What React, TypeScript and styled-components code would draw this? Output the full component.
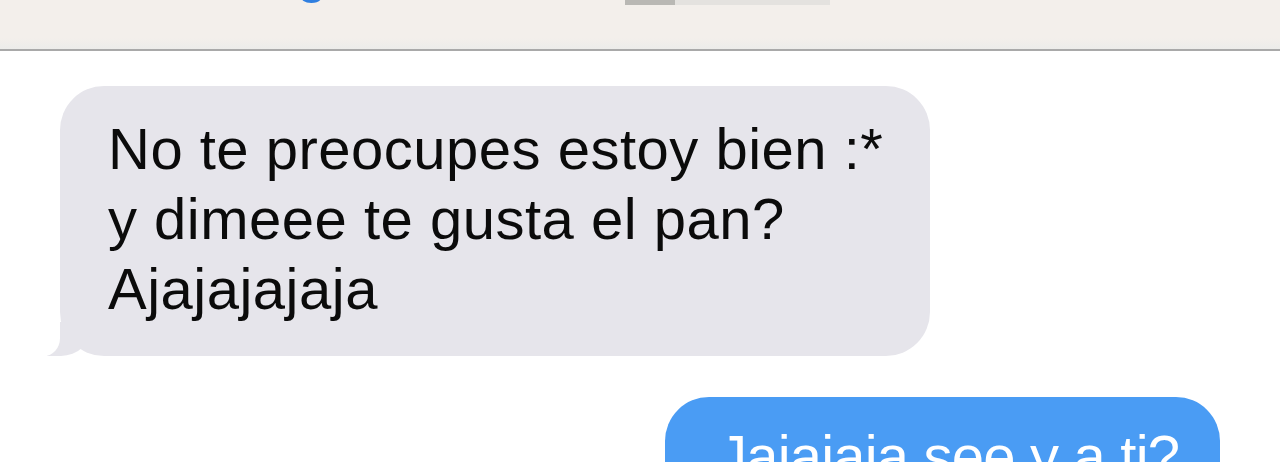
import styled, { createGlobalStyle } from 'styled-components';

const GlobalStyle = createGlobalStyle`
  html, body {
    margin: 0;
    padding: 0;
    background: #ffffff;
    overflow: hidden;
  }

  body {
    font-family: 'Liberation Sans', Arial, Helvetica, sans-serif;
  }
`;

interface Message {
  id: number;
  mine: boolean;
  lines: string[];
}

const messages: Message[] = [
  {
    id: 1,
    mine: false,
    lines: ['No te preocupes estoy bien :*', 'y dimeee te gusta el pan?', 'Ajajajajaja'],
  },
  {
    id: 2,
    mine: true,
    lines: ['Jajajaja see y a ti?'],
  },
];

function App() {
  return (
    <>
      <GlobalStyle />
      <Screen>
        <NavBar>
          <NavInner>
            <BackLink>‹ Messages</BackLink>
            <ContactPhoto>
              <PhotoDark />
            </ContactPhoto>
            <DetailsLink>Details</DetailsLink>
          </NavInner>
        </NavBar>

        <Thread>
          {messages.map(msg => (
            <Row key={msg.id} mine={msg.mine}>
              <Bubble mine={msg.mine}>
                {msg.lines.map(line => (
                  <Line key={line}>{line}</Line>
                ))}
              </Bubble>
            </Row>
          ))}
        </Thread>
      </Screen>
    </>
  );
}

export default App;

const Screen = styled.div`
  width: 1280px;
  height: 462px;
  overflow: hidden;
  background: #ffffff;
`;

const NavBar = styled.header`
  height: 49px;
  overflow: hidden;

  background: linear-gradient(to bottom, #f3efeb 0, #f3efeb 38px, #ececea 49px);
  border-bottom: 2px solid #a9a9a9;
`;

const NavInner = styled.div`
  display: grid;
  grid-template-columns: 625px 205px 1fr;
  align-items: end;

  height: 60px;
  margin-top: -58px;
`;

const BackLink = styled.span`
  padding-left: 48px;

  font-size: 56px;
  line-height: 60px;
  letter-spacing: 7px;
  color: #2f7fe0;
  white-space: nowrap;
`;

const ContactPhoto = styled.div`
  display: flex;

  height: 5px;
  margin-bottom: -3px;

  background: #e4e2df;
`;

const PhotoDark = styled.div`
  width: 50px;
  height: 100%;
  background: #b9b8b4;
`;

const DetailsLink = styled.span`
  justify-self: end;
  padding-right: 35px;

  font-size: 56px;
  line-height: 60px;
  color: #2f7fe0;
`;

const Thread = styled.main`
  display: flex;
  flex-direction: column;
  gap: 41px;

  padding: 35px 60px 0;
`;

const Row = styled.div<{ mine: boolean }>`
  display: flex;
  justify-content: ${({ mine }) => (mine ? 'flex-end' : 'flex-start')};
`;

const Bubble = styled.div<{ mine: boolean }>`
  position: relative;

  width: ${({ mine }) => (mine ? '555px' : '870px')};
  padding: ${({ mine }) => (mine ? '24px 30px 40px 53px' : '28px 30px 32px 48px')};
  box-sizing: border-box;

  background: ${({ mine }) => (mine ? '#4a9cf4' : '#e6e5eb')};
  color: ${({ mine }) => (mine ? '#ffffff' : '#0b0b0b')};
  border-radius: 44px;

  font-size: 58px;
  line-height: 70px;
  letter-spacing: ${({ mine }) => (mine ? '-0.8px' : '0.5px')};

  &::before {
    content: '';
    position: absolute;
    bottom: 0;
    ${({ mine }) => (mine ? 'right: -13px;' : 'left: -13px;')}
    width: 44px;
    height: 34px;
    background: ${({ mine }) => (mine ? '#4a9cf4' : '#e6e5eb')};
    ${({ mine }) =>
      mine ? 'border-bottom-left-radius: 30px 28px;' : 'border-bottom-right-radius: 30px 28px;'}
  }

  &::after {
    content: '';
    position: absolute;
    bottom: 0;
    ${({ mine }) => (mine ? 'right: -40px;' : 'left: -40px;')}
    width: 40px;
    height: 34px;
    background: #ffffff;
    ${({ mine }) =>
      mine ? 'border-bottom-left-radius: 16px 18px;' : 'border-bottom-right-radius: 16px 18px;'}
  }
`;

const Line = styled.div`
  position: relative;
  z-index: 1;
  white-space: nowrap;
`;
